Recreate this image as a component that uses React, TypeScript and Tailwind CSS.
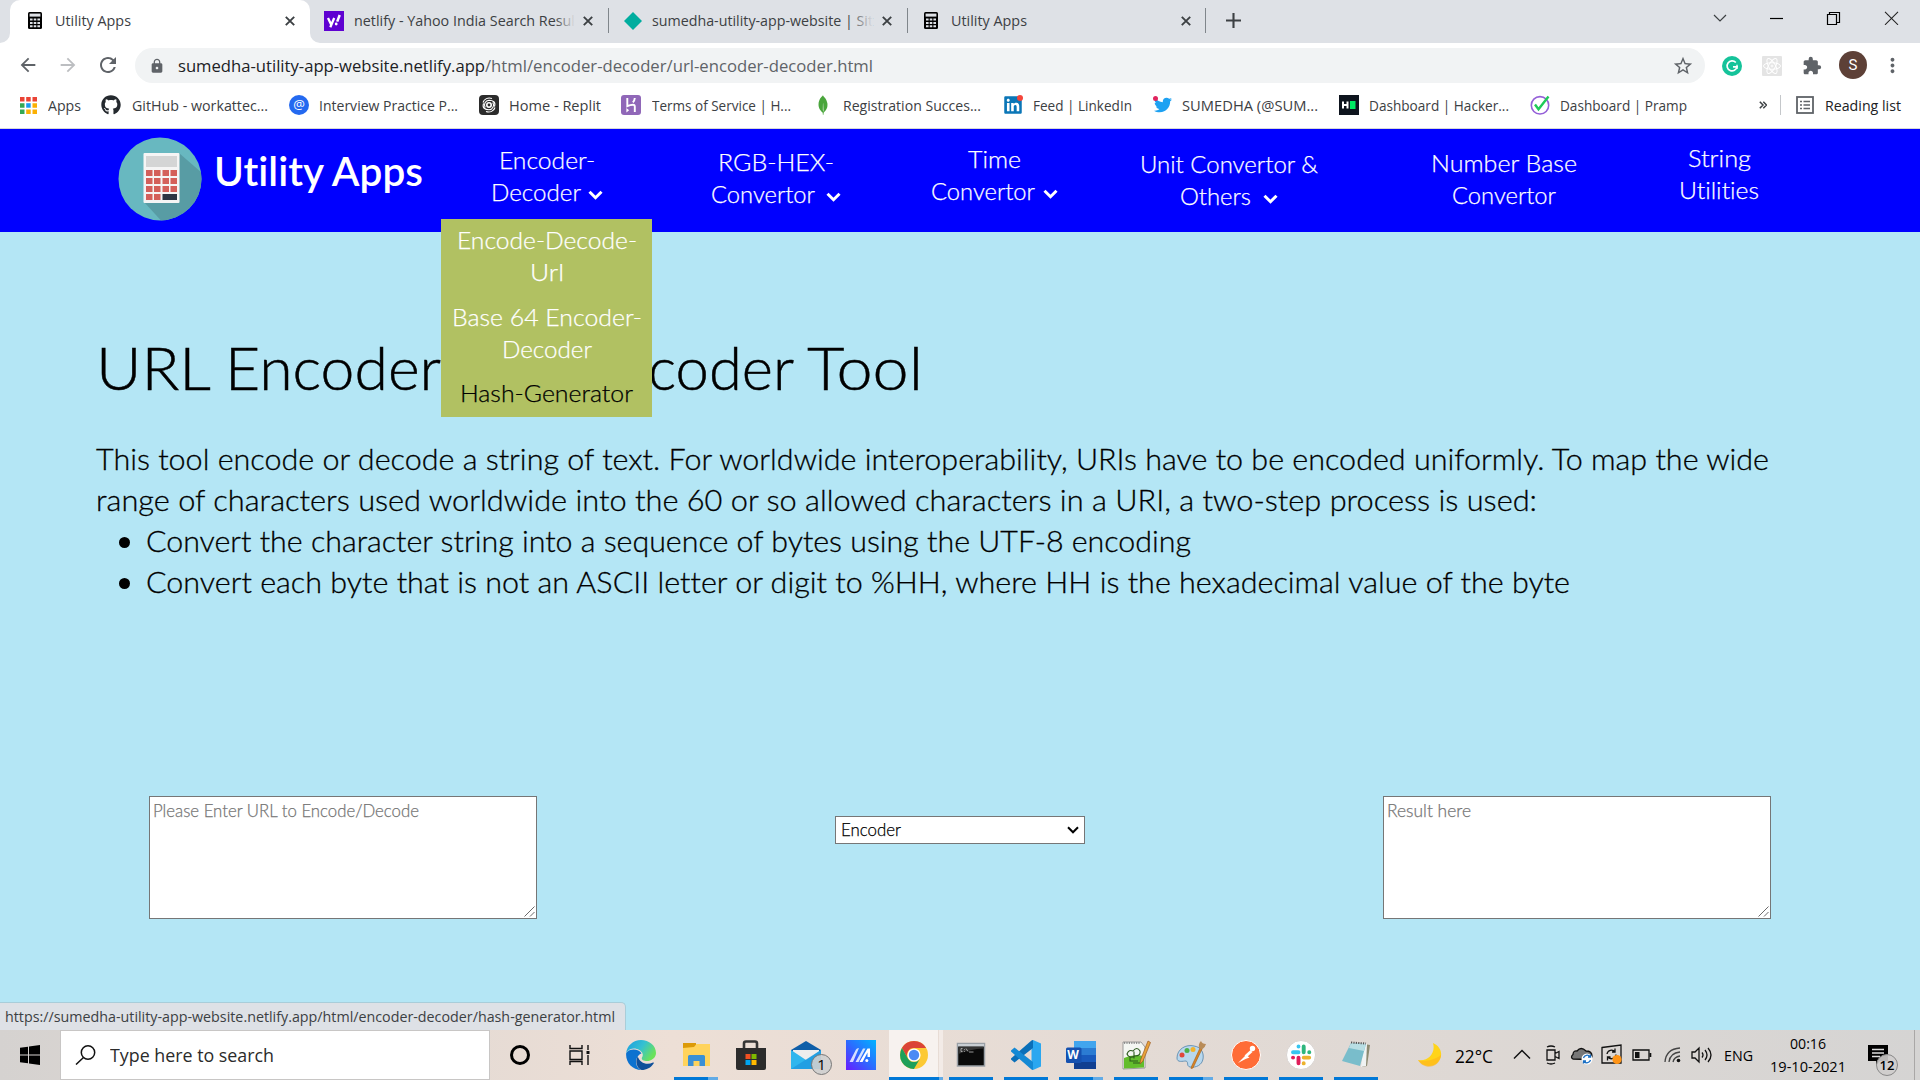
import React, { useLayoutEffect, useRef } from "react";
import { FaGithub, FaLinkedin, FaTwitter } from "react-icons/fa";
import { SiMongodb } from "react-icons/si";
import {
  MdArrowBack,
  MdArrowForward,
  MdExtension,
  MdLock,
  MdMoreVert,
  MdRefresh,
  MdStarBorder,
} from "react-icons/md";

const UI = "font-['Open_Sans','Noto_Sans',sans-serif]";
const PAGE = "font-['Lato','Open_Sans',sans-serif] [font-variant-ligatures:none]";

/** One line of text, condensed or widened to fill the width its class gives. */
function Line({ className = "", children }: { className?: string; children: React.ReactNode }) {
  const outer = useRef<HTMLSpanElement>(null);
  const inner = useRef<HTMLSpanElement>(null);
  useLayoutEffect(() => {
    const o = outer.current;
    const i = inner.current;
    if (!o || !i) return;
    i.style.transform = "none";
    const ratio = o.getBoundingClientRect().width / i.getBoundingClientRect().width;
    i.style.transform = `scaleX(${ratio})`;
  }, []);
  return (
    <span ref={outer} className={"block shrink-0 whitespace-nowrap " + className}>
      <span ref={inner} className="inline-block origin-left">
        {children}
      </span>
    </span>
  );
}

function CloseX({ className = "" }: { className?: string }) {
  return (
    <svg viewBox="0 0 10 10" className={"size-[10px] shrink-0 " + className}>
      <path d="M.8.8l8.4 8.4M9.2.8L.8 9.2" stroke="#3c4043" strokeWidth="1.9" />
    </svg>
  );
}

function CalcFavicon({ className = "" }: { className?: string }) {
  return (
    <svg viewBox="0 0 14 17" className={"h-[17px] w-[14px] shrink-0 " + className}>
      <rect width="14" height="17" rx="1.5" fill="#000" />
      <rect x="1.6" y="1.6" width="10.8" height="3" fill="#dee1e6" />
      <path
        d="M2 6.6h2.6v2H2zM5.7 6.6h2.6v2H5.7zM9.4 6.6H12v2H9.4zM2 10h2.6v2H2zM5.7 10h2.6v2H5.7zM9.4 10H12v2H9.4zM2 13.3h2.6v2H2zM5.7 13.3h2.6v2H5.7zM9.4 13.3H12v2H9.4z"
        fill="#dee1e6"
      />
    </svg>
  );
}

const Divider = ({ className = "" }: { className?: string }) => (
  <div className={"h-[25px] w-px shrink-0 bg-[#80868b] " + className} />
);

function TabStrip() {
  return (
    <div className="flex h-[43px] items-center bg-[#dee1e6] text-[15px] leading-5 text-[#3c4043]">
      <svg viewBox="0 0 10 43" className="h-[43px] w-[10px] shrink-0">
        <path d="M10 33v10H0a10 10 0 0 0 10-10z" fill="#fff" />
      </svg>
      <div className="flex h-[43px] w-[300px] shrink-0 items-center rounded-t-[10px] bg-white pb-[2px] pl-[18px]">
        <CalcFavicon />
        <Line className="mb-px ml-[13px] w-[76px]">Utility Apps</Line>
        <CloseX className="ml-[154px]" />
      </div>
      <svg viewBox="0 0 10 43" className="h-[43px] w-[10px] shrink-0">
        <path d="M0 33v10h10A10 10 0 0 1 0 33z" fill="#fff" />
      </svg>
      <div className="flex h-[43px] grow items-center pb-[2px]">
        <div className="ml-[4px] flex size-5 shrink-0 items-center justify-center bg-[#5f01d1]">
          <svg viewBox="0 0 20 20" className="size-5">
            <path d="M4 7l3 6.3M10.2 7L6.3 16.2" stroke="#fff" strokeWidth="2.3" fill="none" />
            <path d="M15.7 4l-2.5 6.6" stroke="#fff" strokeWidth="2.5" />
            <circle cx="12.2" cy="13" r="1.4" fill="#fff" />
          </svg>
        </div>
        <div className="relative mb-[2px] ml-[10px]">
          <Line className="w-[221px]">netlify - Yahoo India Search Resul</Line>
          <div className="absolute inset-y-0 right-0 w-5 bg-linear-to-r from-transparent to-[#dee1e6]" />
        </div>
        <CloseX className="ml-[8px]" />
        <Divider className="ml-[15px]" />
        <svg viewBox="0 0 18 18" className="ml-[15px] size-[18px] shrink-0">
          <path d="M9 0l9 9-9 9-9-9z" fill="#00ad9f" />
        </svg>
        <div className="relative mb-[2px] ml-[10px]">
          <Line className="w-[221px]">sumedha-utility-app-website | Sit</Line>
          <div className="absolute inset-y-0 right-0 w-6 bg-linear-to-r from-transparent to-[#dee1e6]" />
        </div>
        <CloseX className="ml-[9px]" />
        <Divider className="ml-[15px]" />
        <CalcFavicon className="ml-[16px]" />
        <Line className="mb-[2px] ml-[13px] w-[76px]">Utility Apps</Line>
        <CloseX className="ml-[154px]" />
        <Divider className="ml-[14px]" />
        <svg viewBox="0 0 15 15" className="ml-[20px] size-[15px] shrink-0">
          <path d="M7.5 0v15M0 7.5h15" stroke="#3c4043" strokeWidth="2.1" />
        </svg>
        <svg viewBox="0 0 190 14" className="mb-[5px] ml-auto mr-[20px] h-[14px] w-[190px] shrink-0" fill="none">
          <path d="M4 4l6 6 6-6" stroke="#3c4043" strokeWidth="1.2" />
          <path d="M60 7.500h13" stroke="#000" strokeWidth="1.2" />
          <path d="M117.500 3.500h9v10h-9zM119.500 3.500v-2h10v10h-3" stroke="#000" strokeWidth="1.200" />
          <path d="M175 .8l13 13M188 .8l-13 13" stroke="#222" strokeWidth="1.1" />
        </svg>
      </div>
    </div>
  );
}

function AddressBar() {
  return (
    <div className="flex h-[45px] items-center bg-white text-[#5f6368]">
      <MdArrowBack className="mb-px ml-[17px] size-[22px] shrink-0" />
      <MdArrowForward className="mb-px ml-[18px] size-[22px] shrink-0 text-[#bcbec1]" />
      <MdRefresh className="mb-px ml-[17px] size-[24px] shrink-0" />
      <div className="ml-[15px] flex h-[35px] w-[1570px] shrink-0 items-center rounded-full bg-[#f1f3f4] text-[17px] leading-6">
        <MdLock className="ml-[14px] size-[16px] shrink-0" />
        <Line className="ml-[13px] w-[307px] text-[#202124]">sumedha-utility-app-website.netlify.app</Line>
        <Line className="w-[388px]">/html/encoder-decoder/url-encoder-decoder.html</Line>
        <MdStarBorder className="ml-auto mr-[11px] size-[22px]" />
      </div>
      <svg viewBox="0 0 20 20" className="ml-[17px] size-5 shrink-0">
        <circle cx="10" cy="10" r="10" fill="#15c39a" />
        <path d="M13.800 6.500A5 5 0 1 0 15 10.800h-4" fill="none" stroke="#fff" strokeWidth="1.700" />
        <path d="M15 8.800v4.200" stroke="#fff" strokeWidth="1.400" />
      </svg>
      <svg viewBox="0 0 20 20" className="ml-[20px] size-5 shrink-0" fill="none" stroke="#fff" strokeWidth="1">
        <rect width="20" height="20" rx="1" fill="#e4e4e4" stroke="none" />
        <ellipse cx="10" cy="10" rx="8.500" ry="3.300" />
        <ellipse cx="10" cy="10" rx="8.500" ry="3.300" transform="rotate(60 10 10)" />
        <ellipse cx="10" cy="10" rx="8.500" ry="3.300" transform="rotate(120 10 10)" />
        <circle cx="10" cy="10" r="1" />
      </svg>
      <MdExtension className="ml-[20px] size-[20px] shrink-0" />
      <div className="mb-px ml-[17px] flex size-7 shrink-0 items-center justify-center rounded-full bg-[#5d4037] font-['Roboto',sans-serif] text-[15px] text-white">
        S
      </div>
      <MdMoreVert className="mb-px ml-[14px] size-[23px] shrink-0" />
    </div>
  );
}

function Bookmarks() {
  return (
    <div className="flex h-[41px] items-center border-b border-[#d5d7da] bg-white pb-[6px] text-[15px] leading-5 text-[#3c4043]">
      <svg viewBox="0 0 17 17" className="ml-[20px] size-[17px] shrink-0">
        <path d="M0 0h4.500v4.500H0zM6.200 0h4.500v4.500H6.200zM12.500 0H17v4.500h-4.500z" fill="#ea4335" />
        <path d="M0 6.200h4.500v4.500H0zM0 12.500h4.500V17H0z" fill="#34a853" />
        <path d="M6.200 6.200h4.500v4.500H6.200z" fill="#1a9bf0" />
        <path d="M12.500 6.200H17v4.500h-4.500zM6.200 12.500h4.500V17H6.200zM12.500 12.500H17V17h-4.500z" fill="#fbb003" />
      </svg>
      <Line className="ml-[11px] w-[33px]">Apps</Line>
      <FaGithub className="ml-[20px] size-5 shrink-0 text-[#24292e]" />
      <Line className="ml-[11px] w-[136px]">GitHub - workattec...</Line>
      <div className="ml-[21px] flex size-5 shrink-0 items-center justify-center rounded-full bg-[#2469f0] pb-px text-[13px] leading-none text-white">
        @
      </div>
      <Line className="ml-[10px] w-[139px]">Interview Practice P...</Line>
      <svg viewBox="0 0 20 20" className="ml-[21px] size-5 shrink-0" fill="none" stroke="#fff" strokeWidth="1.100">
        <rect width="20" height="20" rx="4" fill="#2b2b2b" stroke="none" />
        <circle cx="10" cy="10" r="2.200" strokeWidth="1.600" />
        <path d="M6.200 12.500A4.800 4.800 0 0 1 10 5.200c4 0 7 2 5.500 6.500M13.800 7.500a4.800 4.800 0 0 1-3.800 7.300c-4 0-7-2-5.500-6.500" />
        <path d="M4 7.500C5 4 9 2 13 3.500M16 12.500c-1 3.500-5 5.500-9 4" />
      </svg>
      <Line className="ml-[10px] w-[92px]">Home - Replit</Line>
      <svg viewBox="0 0 20 20" className="ml-[20px] size-5 shrink-0" fill="none" stroke="#fff" strokeWidth="1.900">
        <rect width="20" height="20" rx="3" fill="#9067b8" stroke="none" />
        <path d="M6.300 3v8.200c2-1 4-1.500 5.800-1.500 1.300 0 1.700.8 1.700 2V17M13.800 3c-.1 1.700-.7 3-1.900 4.300" />
        <path d="M5.400 13l2.700 2.200-2.700 2.200z" fill="#fff" stroke="none" />
      </svg>
      <Line className="ml-[11px] w-[139px]">Terms of Service | H...</Line>
      <SiMongodb className="ml-[22px] size-5 shrink-0 text-[#4aa53c]" />
      <Line className="ml-[10px] w-[138px]">Registration Succes...</Line>
      <div className="relative ml-[22px] size-[20px] shrink-0">
        <FaLinkedin className="size-[20px] text-[#0a76b7]" />
        <div className="absolute right-0 top-0 size-[6px] rounded-full bg-[#f5453b]" />
      </div>
      <Line className="ml-[10px] w-[99px]">Feed | LinkedIn</Line>
      <div className="relative ml-[22px] size-[18px] shrink-0">
        <FaTwitter className="size-[18px] text-[#1da1f2]" />
        <div className="absolute -left-[1px] top-0 size-[5px] rounded-full bg-[#e0245e]" />
      </div>
      <Line className="ml-[10px] w-[136px]">SUMEDHA (@SUM...</Line>
      <svg viewBox="0 0 20 20" className="ml-[21px] size-5 shrink-0">
        <rect width="20" height="20" fill="#0e141e" />
        <path d="M4 6.500v7M8.500 6.500v7M4 10h4.500" stroke="#fff" strokeWidth="2" />
        <path d="M11 6h5.500v8H11z" fill="#00ea64" />
      </svg>
      <Line className="ml-[10px] w-[140px]">Dashboard | Hacker...</Line>
      <svg viewBox="0 0 20 20" className="ml-[21px] size-5 shrink-0" fill="none">
        <circle cx="10" cy="10.300" r="8.700" stroke="#9560d8" strokeWidth="1.600" />
        <path d="M5 9.500l3.500 4.800L18.500 1.500" stroke="#1fca58" strokeWidth="2.400" />
      </svg>
      <Line className="ml-[10px] w-[127px]">Dashboard | Pramp</Line>
      <svg viewBox="0 0 8 8" className="ml-[72px] size-[8px] shrink-0" fill="none" stroke="#3c4043" strokeWidth="1.500">
        <path d="M.8.700L4 4 .8 7.300M4.300.700L7.500 4 4.300 7.300" />
      </svg>
      <div className="ml-[13px] h-[20px] w-px shrink-0 bg-[#c4c7ca]" />
      <svg viewBox="0 0 18 18" className="ml-[15px] size-[18px] shrink-0" fill="none" stroke="#5f6368">
        <rect x="1" y="1" width="16" height="16" strokeWidth="1.800" />
        <path d="M4 5.500h2M7.500 5.500H14M4 9h2M7.500 9H14M4 12.500h2M7.500 12.500H14" strokeWidth="1.500" />
      </svg>
      <Line className="ml-[11px] w-[76px] text-[#202124]">Reading list</Line>
    </div>
  );
}

function SiteLogo() {
  return (
    <svg viewBox="0 0 84 84" className="ml-[118px] mt-[8px] size-[84px] shrink-0">
      <defs>
        <clipPath id="disc">
          <circle cx="42" cy="42" r="41.500" />
        </clipPath>
      </defs>
      <g clipPath="url(#disc)">
        <rect width="84" height="84" fill="#68b8c0" />
        <path d="M61 16l30 26v60H60L26 65z" fill="#589ca4" />
      </g>
      <rect x="25.500" y="16" width="36" height="50" rx="1" fill="#f5f5f5" />
      <rect x="28" y="19" width="31" height="11" fill="#d4d5d5" />
      <path
        d="M28 33h6.500v6H28zM36 33h6.500v6H36zM44.500 33H51v6h-6.500zM52.500 33H59v6h-6.500zM28 41h6.500v6H28zM36 41h6.500v6H36zM44.500 41H51v6h-6.500zM52.500 41H59v6h-6.500zM28 49h6.500v6H28zM36 49h6.500v6H36zM44.500 49H51v6h-6.500zM52.500 49H59v6h-6.500zM28 57h6.500v6H28zM36 57h6.500v6H36z"
        fill="#d4605a"
      />
      <rect x="44.500" y="57" width="14.500" height="6" fill="#2c3544" />
    </svg>
  );
}

const NavChevron = ({ className = "" }: { className?: string }) => (
  <svg viewBox="0 0 15 10" className={"mt-[5px] h-[10px] w-[15px] shrink-0 " + className}>
    <path d="M1.500 1.700l6 6 6-6" fill="none" stroke="#fff" strokeWidth="3" />
  </svg>
);

function SiteNav() {
  return (
    <nav className="relative z-10 flex h-[103px] items-start bg-[#0000ff] text-[24px] font-light leading-[32px] text-white [-webkit-text-stroke:0.25px]">
      <SiteLogo />
      <Line className="ml-[12px] mt-[15px] w-[209px] text-[41px] font-semibold leading-[54px] [-webkit-text-stroke:0]">
        Utility Apps
      </Line>
      <div className="relative ml-[18px] mt-[15px] flex w-[211px] shrink-0 flex-col items-center">
        <Line className="w-[96px]">Encoder-</Line>
        <div className="flex items-center">
          <Line className="w-[90px]">Decoder</Line>
          <NavChevron className="ml-[7px]" />
        </div>
        <div className="absolute left-0 top-[75px] flex h-[198px] w-[211px] flex-col items-center bg-[#b1c162] pt-[5px]">
          <Line className="w-[180px]">Encode-Decode-</Line>
          <Line className="w-[34px]">Url</Line>
          <Line className="mt-[13px] w-[190px]">Base 64 Encoder-</Line>
          <Line className="w-[90px]">Decoder</Line>
          <Line className="mt-[12px] w-[173px] text-black">Hash-Generator</Line>
        </div>
      </div>
      <div className="ml-[17px] mt-[17px] flex w-[213px] shrink-0 flex-col items-center">
        <Line className="w-[116px]">RGB-HEX-</Line>
        <div className="flex items-center">
          <Line className="w-[104px]">Convertor</Line>
          <NavChevron className="ml-[11px]" />
        </div>
      </div>
      <div className="ml-[7px] mt-[14px] flex w-[210px] shrink-0 flex-col items-center">
        <Line className="w-[53px]">Time</Line>
        <div className="flex items-center">
          <Line className="w-[104px]">Convertor</Line>
          <NavChevron className="ml-[8px]" />
        </div>
      </div>
      <div className="ml-[30px] mt-[19px] flex w-[200px] shrink-0 flex-col items-center">
        <Line className="w-[178px]">Unit Convertor &amp;</Line>
        <div className="flex items-center">
          <Line className="w-[71px]">Others</Line>
          <NavChevron className="ml-[12px]" />
        </div>
      </div>
      <div className="ml-[75px] mt-[18px] flex w-[200px] shrink-0 flex-col items-center">
        <Line className="w-[146px]">Number Base</Line>
        <Line className="w-[104px]">Convertor</Line>
      </div>
      <div className="ml-[35px] mt-[13px] flex w-[160px] shrink-0 flex-col items-center">
        <Line className="w-[63px]">String</Line>
        <Line className="w-[80px]">Utilities</Line>
      </div>
    </nav>
  );
}

function InputBox({ children }: { children: React.ReactNode }) {
  return (
    <div className="flex h-[123px] w-[388px] flex-col justify-between border border-[#767676] bg-white pl-[3px] pt-[2px] text-[17px] leading-6 text-[#757575]">
      {children}
      <svg viewBox="0 0 12 12" className="mb-px mr-px size-[12px] self-end">
        <path d="M1.500 11.500l10-10M7 11.500l4.500-4.500" stroke="#6b6b6b" strokeWidth="1" />
      </svg>
    </div>
  );
}

function ToolPage() {
  return (
    <main className="relative h-[798px] bg-[#b4e6f5] pl-[96px] font-light text-black">
      <h1 className="flex pt-[97px] text-[60px] leading-[76px] [-webkit-text-stroke:0.5px]">
        <Line className="w-[115px]">URL</Line>
        <Line className="ml-[14px] w-[216px]">Encoder</Line>
        <Line className="ml-[207px] w-[146px]">coder</Line>
        <Line className="ml-[13px] w-[116px]">Tool</Line>
      </h1>
      <div className="mt-[33px] text-[30px] leading-[41px] [-webkit-text-stroke:0.3px]">
        <Line className="w-[1673px]">
          This tool encode or decode a string of text. For worldwide interoperability, URIs have to be encoded uniformly. To map the wide
        </Line>
        <Line className="w-[1441px]">
          range of characters used worldwide into the 60 or so allowed characters in a URI, a two-step process is used:
        </Line>
        <ul>
          <li className="flex items-center">
            <div className="ml-[23px] mr-[16px] mt-[3px] size-[11px] rounded-full bg-black" />
            <Line className="w-[1045px]">Convert the character string into a sequence of bytes using the UTF-8 encoding</Line>
          </li>
          <li className="flex items-center">
            <div className="ml-[23px] mr-[16px] mt-[3px] size-[11px] rounded-full bg-black" />
            <Line className="w-[1424px]">
              Convert each byte that is not an ASCII letter or digit to %HH, where HH is the hexadecimal value of the byte
            </Line>
          </li>
        </ul>
      </div>
      <div className="mt-[194px] flex pl-[53px] [-webkit-text-stroke:0.25px]">
        <InputBox>
          <Line className="w-[266px]">Please Enter URL to Encode/Decode</Line>
        </InputBox>
        <div className="ml-[298px] mt-[20px] flex h-[28px] w-[250px] items-center border border-[#767676] bg-white pl-[5px] text-[17px] leading-6">
          <Line className="w-[60px]">Encoder</Line>
          <svg viewBox="0 0 12 8" className="ml-auto mr-[5px] h-[8px] w-[12px]">
            <path d="M1 1.300l5 5 5-5" fill="none" stroke="#000" strokeWidth="2" />
          </svg>
        </div>
        <div className="ml-[298px]">
          <InputBox>
            <Line className="w-[84px]">Result here</Line>
          </InputBox>
        </div>
      </div>
      <div
        className={
          "absolute bottom-0 left-0 h-[28px] w-[626px] rounded-tr-[5px] border-r border-t border-[#a9cdd9] bg-[#dee1e6] pl-[5px] text-[15px] font-normal leading-[27px] text-[#3c4043] " +
          UI
        }
      >
        <Line className="w-[610px]">https://sumedha-utility-app-website.netlify.app/html/encoder-decoder/hash-generator.html</Line>
      </div>
    </main>
  );
}

const svgBox = "size-[30px]";

const StartIcon = () => (
  <svg viewBox="0 0 20 20" className="ml-[20px] size-[20px] shrink-0">
    <path d="M0 2.800L8 1.700v7.800H0zM9 1.500L20 0v9.500H9zM0 10.500h8v7.800L0 17.200zM9 10.500h11V20L9 18.500z" fill="#000" />
  </svg>
);

const EdgeIcon = () => (
  <svg viewBox="0 0 30 30" className={svgBox}>
    <defs>
      <linearGradient id="edgeTop" x1="0" y1="0" x2="1" y2=".5">
        <stop offset="0" stopColor="#1b9de2" />
        <stop offset=".55" stopColor="#35c1d1" />
        <stop offset="1" stopColor="#6be25a" />
      </linearGradient>
    </defs>
    <path d="M15 0C7 0 .8 6 .2 13c3-5 9-5.500 13-3 3.500 2 4.500 5 2.800 7.500-.8 1.500.5 3.300 4 3.500 5 .3 10-2.800 10-8C30 5.500 23 0 15 0z" fill="url(#edgeTop)" />
    <path d="M.2 13C-.8 22 6 30 15.500 30c-6-2-7-10-3-14.500 1-1.200 2.200-1.800 3-2C13 8.500 3.500 8 .2 13z" fill="#0c72d0" />
    <path d="M11.800 16.500C9 21 10.500 28 15.500 30c5 0 9.500-2.300 12.300-6.800.3-.6 0-1-.8-.7-6.500 3.300-13.500 0-15.200-6z" fill="#10509a" />
  </svg>
);

const ExplorerIcon = () => (
  <svg viewBox="0 0 30 30" className={svgBox}>
    <path d="M2 3h13v8H2z" fill="#dc9a08" />
    <path d="M2 8l11-1 2.500-3H29v22H2z" fill="#ffd35c" />
    <path d="M7 26V16.500q0-1.500 1.500-1.500h14q1.500 0 1.500 1.500V26h-5.500v-5h-6v5z" fill="#3a90d6" />
  </svg>
);

const StoreIcon = () => (
  <svg viewBox="0 0 30 30" className={svgBox}>
    <path d="M8 9V3.500Q8 1.500 10 1.500h9q2 0 2 2V9" fill="none" stroke="#353535" strokeWidth="2.600" />
    <path d="M0 8h30v20q0 2-2 2H2q-2 0-2-2z" fill="#2c2c2c" />
    <path d="M9.500 14h5v5h-5z" fill="#f25022" />
    <path d="M15.500 14h5v5h-5z" fill="#7fba00" />
    <path d="M9.500 20h5v5h-5z" fill="#00a4ef" />
    <path d="M15.500 20h5v5h-5z" fill="#ffb900" />
  </svg>
);

const MailIcon = () => (
  <svg viewBox="0 0 30 30" className={svgBox}>
    <path d="M0 10L15 1l15 9v5H0z" fill="#0f5ea8" />
    <path d="M2 10h26v6L15 22 2 16z" fill="#ededed" />
    <path d="M0 10l15 10 15-10v19H0z" fill="#2fb6ee" />
    <path d="M0 29l30-19v19z" fill="#1c93dd" opacity=".65" />
  </svg>
);

const AsusIcon = () => (
  <svg viewBox="0 0 30 30" className={svgBox}>
    <defs>
      <linearGradient id="asus" x1="0" y1="1" x2="1" y2="0">
        <stop offset="0" stopColor="#6a1bff" />
        <stop offset=".5" stopColor="#2b6cff" />
        <stop offset="1" stopColor="#00b4ff" />
      </linearGradient>
    </defs>
    <rect width="30" height="30" fill="url(#asus)" />
    <path d="M3.500 22L10 9.500q.6-1.500 3-1.500L7 22zM9.500 22L17 8.500h2.500L12.500 22z" fill="#fff" opacity=".8" />
    <path d="M13.500 22L21.500 8.500H24V17h-2.500v-4.500L16.500 22z" fill="#fff" />
    <circle cx="20.800" cy="20.500" r="1.500" fill="#fff" />
  </svg>
);

const ChromeIcon = () => (
  <svg viewBox="0 0 28 28" className="size-[28px]">
    <circle cx="14" cy="14" r="14" fill="#fcc934" />
    <path d="M14 0a14 14 0 0 1 12.100 7H14a7 7 0 0 0-6.100 10.500L1.900 7A14 14 0 0 1 14 0z" fill="#db4437" />
    <path d="M1.900 7a14 14 0 0 0 12 21l6.200-10.500A7 7 0 0 1 7.900 17.500z" fill="#1ea05a" />
    <circle cx="14" cy="14" r="6.600" fill="#fff" />
    <circle cx="14" cy="14" r="5.200" fill="#4a8af4" />
  </svg>
);

const TerminalIcon = () => (
  <svg viewBox="0 0 30 30" className={svgBox}>
    <rect x="1.500" y="3.500" width="27" height="22.500" fill="#0a0a0a" stroke="#9aa0a6" strokeWidth="1.500" />
    <path d="M2 4h26v2.500H2z" fill="#c9ced3" />
    <path d="M2.500 14Q14 9 27.500 8.500V7h-25z" fill="#353535" />
    <path d="M6.500 8.500H5v3h1.500M8.500 9v.8M8.500 11v.8M10 8.500l2 3M13 12h4.500" fill="none" stroke="#bbb" strokeWidth=".8" />
  </svg>
);

const VsCodeIcon = () => (
  <svg viewBox="0 0 30 30" className={svgBox}>
    <path d="M22 0l8 3.500v23L22 30 20.500 28.500V1.500z" fill="#2aa7f0" />
    <path d="M22 0v8L3.500 22.500 0 19.500v-1L20.500.500z" fill="#0a6fb8" />
    <path d="M22 30v-8L3.500 7.500 0 10.500v1L20.500 29.500z" fill="#1489d4" />
  </svg>
);

const WordIcon = () => (
  <div className="relative size-[30px]">
    <svg viewBox="0 0 30 30" className={svgBox}>
      <path d="M8 1h22v8H8z" fill="#41a5ee" />
      <path d="M8 8h22v7H8z" fill="#2b7cd3" />
      <path d="M8 15h22v7H8z" fill="#185abd" />
      <path d="M8 22h22v7H8z" fill="#103f91" />
      <rect x="0" y="7.500" width="15.500" height="15.500" rx="1.500" fill="#1551b0" />
    </svg>
    <span className="absolute left-0 top-[7px] w-[15px] text-center text-[12px] font-bold leading-[16px] text-white">W</span>
  </div>
);

const NotepadPlusIcon = () => (
  <svg viewBox="0 0 30 30" className={svgBox}>
    <path d="M2 2h18l4 5v21L2 29z" fill="#f4f6f2" stroke="#888" strokeWidth=".8" />
    <path d="M3 18q8-4 20-2v11.500L3 28.500z" fill="#63bd2c" />
    <path d="M3 3h16" stroke="#777" strokeDasharray="1.200 1.200" strokeWidth="1.500" />
    <path
      d="M6 14q2-5 6-3 4-5 7 0 1 5-5 5-6 3-8-2zM9 17v4h8M13 11.500v7M12 23h7"
      fill="none"
      stroke="#2c5a1c"
      strokeWidth="1.100"
    />
    <path d="M27 1l2.500 1.500L22 21l-3 3 .5-4z" fill="#e9a33a" stroke="#9c5a22" strokeWidth=".700" />
  </svg>
);

const PaintIcon = () => (
  <svg viewBox="0 0 30 30" className={svgBox}>
    <path d="M1 18C1 9 10 4 18 6c8 1 10 8 9 13-1 6-7 9-13 8-4-1-1-5-4-6-3 0-9 2-9-3z" fill="#b8d8ee" stroke="#6b94b5" />
    <circle cx="6" cy="15" r="2.500" fill="#e0483c" />
    <circle cx="11" cy="10.500" r="2.500" fill="#4eb04a" />
    <circle cx="17" cy="9.500" r="2.500" fill="#f2b32c" />
    <path d="M24 8l2 1-9 19-2 .500.500-2z" fill="#d98526" stroke="#a15c17" strokeWidth=".600" />
    <path d="M23 8q-1-4 2-7 1 3 5 3-1 4-4 5.500z" fill="#b98c58" />
  </svg>
);

const PostmanIcon = () => (
  <svg viewBox="0 0 30 30" className={svgBox}>
    <circle cx="15" cy="15" r="14.500" fill="#ff6c37" stroke="#fff" />
    <path d="M7 23l8-8 3.500 2.500-4 1.500z" fill="#fff" />
    <path d="M13.500 15.500l6-5.500 2 2-5.500 5z" fill="#fff" />
    <circle cx="21.500" cy="8.500" r="2.700" fill="#fff" />
  </svg>
);

const SlackIcon = () => (
  <svg viewBox="0 0 30 30" className={svgBox}>
    <circle cx="15" cy="15" r="14.500" fill="#fff" stroke="#d9d4d1" />
    <g fill="none" strokeWidth="3.900" strokeLinecap="round">
      <path d="M12.500 6.500v.1M7 12.300h5.500" stroke="#36c5f0" />
      <path d="M17.700 6.500v5.800M23.200 12.300h.1" stroke="#2eb67d" />
      <path d="M17.700 17.600h5.500M17.700 23.300v.1" stroke="#ecb22e" />
      <path d="M12.500 17.600v5.700M7 17.600h.1" stroke="#e01e5a" />
    </g>
  </svg>
);

const NotepadIcon = () => (
  <svg viewBox="0 0 30 30" className={svgBox}>
    <path d="M23 4l6 1-3 21-5 1z" fill="#8d8a72" />
    <path d="M23 3l3 1-1 22-5 1z" fill="#f0f3f3" />
    <path d="M10 3l15 1-6 22-18-5z" fill="#79bdcb" />
    <path d="M10 3l15 1-2 7L8 8z" fill="#b8dee4" />
    <path d="M10 2.500l15 1" stroke="#555" strokeDasharray="1.200 1.200" strokeWidth="2" />
  </svg>
);

type App = { icon: React.ReactNode; mark?: "full" | "stack" | "active"; badge?: string };

const apps: App[] = [
  { icon: <EdgeIcon /> },
  { icon: <ExplorerIcon />, mark: "stack" },
  { icon: <StoreIcon /> },
  { icon: <MailIcon />, badge: "1" },
  { icon: <AsusIcon /> },
  { icon: <ChromeIcon />, mark: "active" },
  { icon: <TerminalIcon />, mark: "full" },
  { icon: <VsCodeIcon />, mark: "full" },
  { icon: <WordIcon />, mark: "stack" },
  { icon: <NotepadPlusIcon />, mark: "full" },
  { icon: <PaintIcon />, mark: "stack" },
  { icon: <PostmanIcon />, mark: "full" },
  { icon: <SlackIcon />, mark: "full" },
  { icon: <NotepadIcon />, mark: "full" },
];

function TaskApp({ icon, mark, badge }: App) {
  const active = mark === "active";
  return (
    <div className="relative flex h-[50px] w-[55px] shrink-0 items-center justify-center">
      {active && <div className="absolute left-px top-0 h-[50px] w-[49px] bg-[#f7f2ef]" />}
      {active && <div className="absolute left-[51px] top-0 h-[50px] w-[4px] bg-[#f3ebe7]" />}
      <div className={active ? "relative mr-[3px]" : "relative"}>{icon}</div>
      {badge && (
        <div className="absolute left-[33px] top-[24px] flex size-[21px] items-center justify-center rounded-full border border-[#777] bg-[#cfcfcf]/90 text-[15px] leading-none text-black">
          {badge}
        </div>
      )}
      {mark && (
        <div className={"absolute bottom-0 flex h-[3px] bg-[#0078d7] " + (active ? "left-px w-[54px]" : "left-[6px] w-[44px]")}>
          {mark === "stack" && <div className="ml-auto w-[10px] bg-[#62abe6]" />}
          {active && <div className="ml-auto w-[4px] bg-[#62abe6]" />}
        </div>
      )}
    </div>
  );
}

function Tray() {
  return (
    <>
      <svg viewBox="0 0 24 24" className="ml-[35px] size-[24px] shrink-0">
        <path d="M15 0c7 3 10 10 7 16-4 9-17 9-22 1 10 2 18-7 15-17z" fill="#ffd41a" />
        <path d="M0 17c5 2 15 1 23-5-1 13-17 16-23 5z" fill="#ffb21c" opacity=".6" />
      </svg>
      <Line className="ml-[13px] mt-[2px] w-[38px] text-[18px] leading-6">22°C</Line>
      <svg viewBox="0 0 200 26" className="ml-[20px] h-[26px] w-[200px] shrink-0" fill="none" stroke="#111" strokeWidth="1.300">
        <path d="M1 16.500l8-8 8 8" strokeWidth="1.500" />
        <path d="M34 8h8v10h-8zM42 11.500l4-2v7l-4-2M34 5q4-2 8 0M34 21q4 2 8 0" />
        <path d="M60 17q-3-2 0-4.500 0-4 4-3.500 4-5 9 0 6 0 6 5 0 3-4 3.500z" fill="#777" />
        <circle cx="74" cy="17" r="5.500" fill="#fff" stroke="none" />
        <path d="M70.500 16a3.800 3.800 0 0 1 6.500-1.500M77.500 18a3.800 3.800 0 0 1-6.500 1.500M77.500 12.500v2.500H75M70.500 21.500V19H73" stroke="#1a6fc4" />
        <path d="M89 5.500l19-2.500v18H89z" />
        <path d="M94 12a4.500 4.500 0 0 1 8-2M103 12.500a4.500 4.500 0 0 1-8 2.500M102 6.500V10h-3M94.500 18.500V15h3" />
        <circle cx="104" cy="17.500" r="4.600" fill="#ff9416" stroke="none" />
        <path d="M120 8h16v10h-16z" />
        <path d="M122 10h4.500v6H122zM136.500 11h1.800v4h-1.800z" fill="#111" stroke="none" />
        <path d="M152 20Q153 7 167 6M156 20q1-9 11-10M160 20q1-5 7-6" stroke="#444" />
        <circle cx="165.500" cy="18.500" r="1.800" fill="#111" stroke="none" />
        <path d="M179 10h3l4-4v14l-4-4h-3zM189 10.500q2 2.500 0 5M192 8q4 5 0 10M195 6q6 7 0 14" />
      </svg>
      <Line className="ml-[11px] w-[29px] text-[15px] leading-5">ENG</Line>
      <div className="ml-[17px] flex w-[76px] shrink-0 flex-col items-center text-[15px] leading-[23px]">
        <Line className="w-[36px]">00:16</Line>
        <Line className="w-[76px]">19-10-2021</Line>
      </div>
      <div className="relative ml-[22px] h-[50px] w-[34px] shrink-0">
        <svg viewBox="0 0 20 20" className="mt-[15px] size-[20px]">
          <path d="M0 0h20v16h-8l-4 4v-4H0z" fill="#000" />
          <path d="M4 4.500h12M4 8h12M4 11.500h8" stroke="#ddd" strokeWidth="1.300" />
        </svg>
        <div className="absolute left-[8px] top-[24px] flex size-[22px] items-center justify-center rounded-full border border-[#888] bg-[#cfcdcc]/90 text-[13px] font-semibold leading-none text-black">
          12
        </div>
      </div>
      <div className="ml-auto mr-[5px] h-[50px] w-px bg-[#a9a7a6]" />
    </>
  );
}

function Taskbar() {
  return (
    <footer className="flex h-[50px] items-center bg-linear-to-r from-[#d5d2d0] via-[#eddfd6] via-35% to-[#d5d4d3] text-black">
      <StartIcon />
      <div className="ml-[20px] flex h-[50px] w-[430px] shrink-0 items-center border border-[#c8c6c5] bg-white">
        <svg viewBox="0 0 21 20" className="ml-[14px] h-[20px] w-[21px]" fill="none" stroke="#111" strokeWidth="1.500">
          <circle cx="13" cy="7.500" r="6.700" />
          <path d="M8.500 12.500L1 19.500" />
        </svg>
        <Line className="ml-[14px] w-[164px] text-[18px] leading-6 text-[#2b2b2b]">Type here to search</Line>
      </div>
      <div className="ml-[20px] size-[20px] shrink-0 rounded-full border-[3px] border-black" />
      <svg viewBox="0 0 21 20" className="ml-[39px] h-[20px] w-[21px] shrink-0" fill="none" stroke="#111" strokeWidth="1.400">
        <path d="M1 0v3.500h12V0M1 6h12v8.500H1zM1 20v-3.500h12V20M19 0v5M19 10v10" />
        <path d="M17.500 6h3v3h-3z" fill="#111" stroke="none" />
      </svg>
      <div className="flex shrink-0 pl-[23px]">
        {apps.map((app, i) => (
          <TaskApp key={i} {...app} />
        ))}
      </div>
      <Tray />
    </footer>
  );
}

export default function App() {
  return (
    <div className="h-[1080px] w-[1920px] overflow-hidden">
      <header className={UI}>
        <TabStrip />
        <AddressBar />
        <Bookmarks />
      </header>
      <div className={PAGE}>
        <SiteNav />
        <ToolPage />
      </div>
      <div className={UI}>
        <Taskbar />
      </div>
    </div>
  );
}
